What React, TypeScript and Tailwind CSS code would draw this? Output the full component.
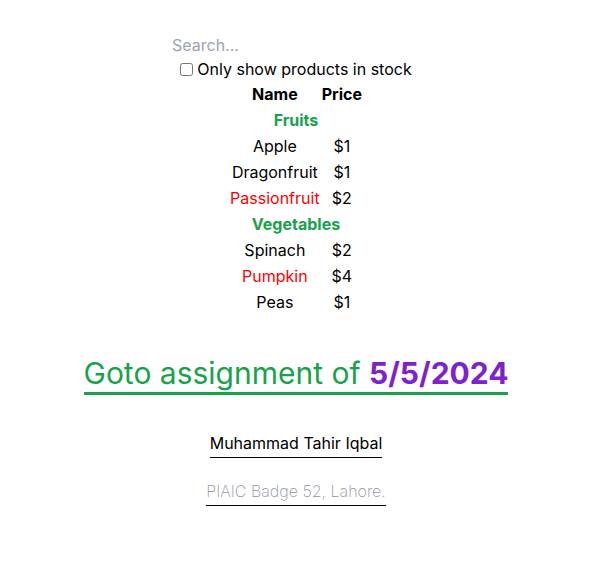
const products = [
  { category: 'Fruits', price: '$1', stocked: true, name: 'Apple' },
  { category: 'Fruits', price: '$1', stocked: true, name: 'Dragonfruit' },
  { category: 'Fruits', price: '$2', stocked: false, name: 'Passionfruit' },
  { category: 'Vegetables', price: '$2', stocked: true, name: 'Spinach' },
  { category: 'Vegetables', price: '$4', stocked: false, name: 'Pumpkin' },
  { category: 'Vegetables', price: '$1', stocked: true, name: 'Peas' },
];

const categories = ['Fruits', 'Vegetables'];

export default function App() {
  return (
    <div className="w-[592px] min-h-[574px] flex flex-col items-center pt-[33px] font-['Inter',sans-serif] text-black">
      <input
        type="text"
        placeholder="Search..."
        className="w-[248px] h-6 outline-none placeholder:text-[#9ca3af]"
      />
      <label className="flex items-center gap-1 h-6">
        <input type="checkbox" className="w-[13px] h-[13px]" />
        Only show products in stock
      </label>
      <table className="-mt-px border-separate border-spacing-0.5">
        <thead>
          <tr>
            <th className="font-bold">Name</th>
            <th className="font-bold">Price</th>
          </tr>
        </thead>
        <tbody>
          {categories.map((cat) => (
            <>
              <tr key={cat}>
                <th colSpan={2} className="font-bold text-[#16a34a]">
                  {cat}
                </th>
              </tr>
              {products
                .filter((p) => p.category === cat)
                .map((p) => (
                  <tr key={p.name}>
                    <td className={p.stocked ? 'text-center' : 'text-center text-[#ff0000]'}>{p.name}</td>
                    <td className="text-center">{p.price}</td>
                  </tr>
                ))}
            </>
          ))}
        </tbody>
      </table>

      <h1 className="mt-[39px] pb-px text-3xl text-[#16a34a] border-b-[3px] border-[#16a34a]">
        Goto assignment of <span className="font-bold text-[#7e22ce]">5/5/2024</span>
      </h1>

      <p className="mt-[36px] pb-[2px] border-b border-black">Muhammad Tahir Iqbal</p>
      <p className="mt-[21px] pb-[2px] border-b border-black font-extralight text-[#8f959e]">PIAIC Badge 52, Lahore.</p>
    </div>
  );
}
